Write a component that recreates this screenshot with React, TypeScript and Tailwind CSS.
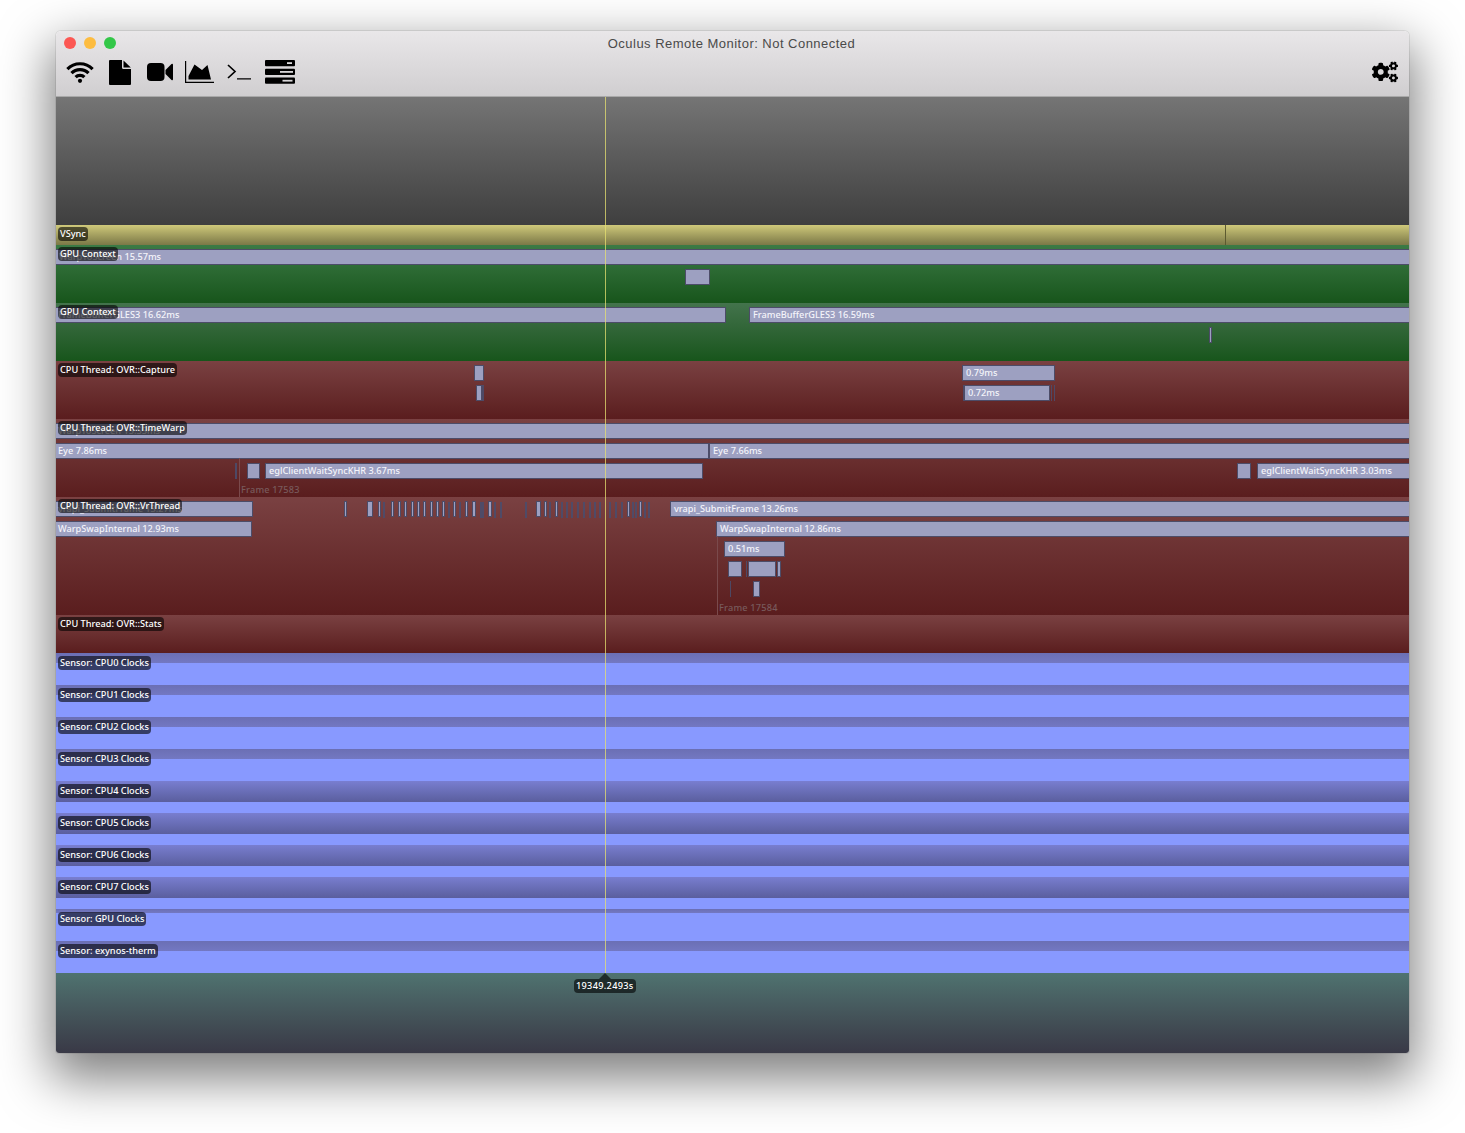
import React from "react";
import { FaCogs } from "react-icons/fa";

const W = 56;
type B = { x: number; r: number; row?: number; y?: number; t?: string; d?: boolean };

function Bar({ b, top }: { b: B; top: number }) {
  const y = b.y !== undefined ? b.y - top : 4 + (b.row ?? 0) * 20;
  const shift = b.t ? 1 : 0;
  const x = b.x - W - shift;
  const w = b.r - b.x + shift;
  const cls = b.d
    ? "absolute h-4 bg-[#4b4d6c] opacity-90"
    : b.t
      ? "absolute h-4 border border-[#4c4c68] bg-[#9da0c1] pl-[3px] text-[9.2px] font-medium leading-[14px] text-[#f4f4fa] whitespace-nowrap overflow-hidden"
      : "absolute h-4 border border-[#4c4c68] bg-[#9da0c1]";
  return (
    <div className={cls} style={{ left: x, top: y, width: w }}>
      {b.t}
    </div>
  );
}

function Label({ children, top = 2 }: { children: React.ReactNode; top?: number }) {
  return (
    <div
      className="absolute left-[2px] z-10 h-[14px] rounded-[4px] bg-black/60 px-[2px] text-[9.2px] font-medium leading-[14px] text-white whitespace-nowrap"
      style={{ top }}
    >
      {children}
    </div>
  );
}

function Track({
  top,
  height,
  cls,
  label,
  bars = [],
  children,
}: {
  top: number;
  height: number;
  cls: string;
  label: string;
  bars?: B[];
  children?: React.ReactNode;
}) {
  return (
    <div className={"relative overflow-hidden " + cls} style={{ height }}>
      {bars.map((b, i) => (
        <Bar key={i} b={b} top={top} />
      ))}
      {children}
      <Label>{label}</Label>
    </div>
  );
}

function Sensor({ label, head, deep }: { label: string; head: string; deep?: boolean }) {
  return (
    <div className="relative h-8 bg-[#8899ff]">
      <div
        className={
          deep
            ? "bg-gradient-to-b from-[#797ed0] to-[#5a5e9e] " + head
            : "bg-gradient-to-b from-[#6b6fb4] to-[#7378c2] " + head
        }
      />
      <Label top={3}>{label}</Label>
    </div>
  );
}

const L = (x: number, wide = 1): B => ({ x: x - 1, r: x + 1 + wide, y: 501 });
const lightTicks = [345, 379, 392, 399, 405, 412, 418, 424, 431, 437, 443, 454, 466, 545, 556, 628, 640];
const darkTicks = [384, 449, 460, 481, 483, 495, 501, 526, 550, 562, 567, 572, 578, 584, 590, 595, 600, 610, 616, 622, 633, 636, 645, 649];

function Wifi() {
  return (
    <svg width="28" height="21" viewBox="0 0 28 21" fill="none" stroke="#000" strokeWidth="3.2" className="mt-[1px]">
      <path d="M1.4 7.1 A17.5 17.5 0 0 1 26.6 7.1" />
      <path d="M5.5 11.2 A11.7 11.7 0 0 1 22.5 11.2" />
      <path d="M9.6 15.2 A6 6 0 0 1 18.4 15.2" />
      <circle cx="14" cy="18.8" r="2.1" fill="#000" stroke="none" />
    </svg>
  );
}
function FileIcon() {
  return (
    <svg width="22" height="25" viewBox="0 0 22 25" fill="#000">
      <path d="M1 0 H13 V7.5 Q13 9 14.5 9 H22 V24 Q22 25 21 25 H1 Q0 25 0 24 V1 Q0 0 1 0Z" />
      <path d="M14.5 .5 L21.8 7.6 H14.5Z" />
    </svg>
  );
}
function VideoIcon() {
  return (
    <svg width="26" height="18" viewBox="0 0 26 18" fill="#000">
      <rect width="17.5" height="18" rx="4" />
      <path d="M18.5 7 L24.5 1 Q26 0 26 2 V16 Q26 18 24.5 17 L18.5 11Z" />
    </svg>
  );
}
function AreaIcon() {
  return (
    <svg width="29" height="22" viewBox="0 0 29 22" fill="#000" className="-translate-x-[1px]">
      <path d="M0 0 H1.2 V20.8 H29 V22 H0Z" />
      <path d="M3.5 18.5 V15 L9.5 3.5 L17 9 L22.5 4 L26 18.5Z" />
    </svg>
  );
}
function TerminalIcon() {
  return (
    <svg width="24" height="16" viewBox="0 0 24 16" fill="none" stroke="#000" className="-translate-x-[1px]">
      <path d="M1 1 L8 7.5 L1 14" strokeWidth="1.7" />
      <path d="M10 14.8 H24" strokeWidth="1.3" />
    </svg>
  );
}
function ServerIcon() {
  return (
    <svg width="30" height="24" viewBox="0 0 30 24" fill="#000">
      <rect y="0" width="30" height="6.2" rx="1" />
      <rect y="8.8" width="30" height="6.2" rx="1" />
      <rect y="17.6" width="30" height="6.2" rx="1" />
      <rect x="22" y="2.2" width="5" height="1.8" fill="#dddbdd" />
      <rect x="15" y="11" width="13" height="1.8" fill="#d9d7d9" />
      <rect x="17.5" y="19.8" width="10" height="1.8" fill="#d6d4d6" />
    </svg>
  );
}

const SANS = "font-['Noto_Sans',sans-serif]";

export default function App() {
  return (
    <div className={"min-h-[1133px] bg-white pl-[56px] pt-[31px] " + SANS}>
      <div className="relative w-[1353px] overflow-hidden rounded-t-[5px] rounded-b-[3px] shadow-[0_20px_50px_6px_rgba(0,0,0,0.5),0_0_0_1px_rgba(0,0,0,0.08)]">
        <div className="h-[66px] border-b border-[#a9a9a9] bg-gradient-to-b from-[#e9e7e9] to-[#d0ced0]">
          <div className="grid h-[24px] grid-cols-[1fr_auto_1fr] items-center pl-2 pr-[10px]">
            <div className="flex gap-2">
              <span className="size-3 rounded-full bg-[#fc5753]" />
              <span className="size-3 rounded-full bg-[#fdbc40]" />
              <span className="size-3 rounded-full bg-[#33c748]" />
            </div>
            <div className="font-['Liberation_Sans',sans-serif] text-[13px] leading-none tracking-[0.47px] text-[#4a4a4a]">
              Oculus Remote Monitor: Not Connected
            </div>
            <div />
          </div>
          <div className="flex h-[34px] items-center justify-between pl-1 pr-[4px]">
            <div className="flex">
              {[Wifi, FileIcon, VideoIcon, AreaIcon, TerminalIcon, ServerIcon].map((I, i) => (
                <div key={i} className="flex h-[34px] w-10 items-center justify-center">
                  <I />
                </div>
              ))}
            </div>
            <div className="flex h-[34px] w-10 items-center justify-center">
              <FaCogs size={26} color="#000" />
            </div>
          </div>
        </div>

        <div className="h-[128px] bg-gradient-to-b from-[#757575] to-[#3f3f3f]" />

        <div className="relative h-[20px] bg-gradient-to-b from-[#cfc97a] to-[#7b7847]">
          <div className="absolute left-[1169px] top-0 h-full w-[1px] bg-[#5c5a30]" />
          <Label>VSync</Label>
        </div>

        <Track top={245} height={58} cls="bg-gradient-to-b from-[#3b7a45] to-[#17551b]" label="GPU Context"
          bars={[
            { x: 56, r: 1412, row: 0, t: "WarpToScreen 15.57ms" },
            { x: 685, r: 710, row: 1 },
          ]} />
        <Track top={303} height={58} cls="bg-gradient-to-b from-[#43734c] to-[#17551b]" label="GPU Context"
          bars={[
            { x: 55, r: 726, row: 0, t: "FrameBufferGLES3 16.62ms" },
            { x: 750, r: 1412, row: 0, t: "FrameBufferGLES3 16.59ms" },
            { x: 1209, r: 1212, row: 1 },
          ]} />
        <Track top={361} height={58} cls="bg-gradient-to-b from-[#7a4142] to-[#5a1d1e]" label="CPU Thread: OVR::Capture"
          bars={[
            { x: 474, r: 484, row: 0 },
            { x: 476, r: 482, row: 1 },
            { x: 482, r: 484, row: 1, d: true },
            { x: 963, r: 1055, row: 0, t: "0.79ms" },
            { x: 965, r: 1050, row: 1, t: "0.72ms" },
            { x: 963, r: 964, row: 1, d: true },
            { x: 1051, r: 1052, row: 1, d: true },
            { x: 1054, r: 1055, row: 1, d: true },
          ]} />
        <Track top={419} height={78} cls="bg-gradient-to-b from-[#7a4142] to-[#5a1d1e]" label="CPU Thread: OVR::TimeWarp"
          bars={[
            { x: 55, r: 1412, row: 0, t: "WarpToScreen 15.55ms" },
            { x: 55, r: 709, row: 1, t: "Eye 7.86ms" },
            { x: 710, r: 1412, row: 1, t: "Eye 7.66ms" },
            { x: 235, r: 237, row: 2, d: true },
            { x: 247, r: 260, row: 2 },
            { x: 266, r: 703, row: 2, t: "eglClientWaitSyncKHR 3.67ms" },
            { x: 1237, r: 1251, row: 2 },
            { x: 1258, r: 1412, row: 2, t: "eglClientWaitSyncKHR 3.03ms" },
          ]}>
          <div className="absolute left-[183px] top-[39px] bottom-0 w-[1px] bg-[#7a4a4c]" />
          <div className="absolute left-[185px] top-[64px] text-[9.2px] font-medium leading-[14px] tracking-[0.2px] text-[#785a5c]">Frame 17583</div>
        </Track>
        <Track top={497} height={118} cls="bg-gradient-to-b from-[#7a4142] to-[#5a1d1e]" label="CPU Thread: OVR::VrThread"
          bars={[
            { x: 55, r: 253, row: 0, t: "vrapi_SubmitFrame 13.27ms" },
            { x: 671, r: 1412, row: 0, t: "vrapi_SubmitFrame 13.26ms" },
            { x: 55, r: 252, row: 1, t: "WarpSwapInternal 12.93ms" },
            { x: 717, r: 1412, row: 1, t: "WarpSwapInternal 12.86ms" },
            { x: 725, r: 785, row: 2, t: "0.51ms" },
            { x: 728, r: 742, row: 3 },
            { x: 746, r: 747, row: 3, d: true },
            { x: 748, r: 776, row: 3 },
            { x: 777, r: 781, row: 3 },
            { x: 730, r: 731, row: 4, d: true },
            { x: 753, r: 760, row: 4 },
            { x: 367, r: 373, row: 0 },
            { x: 472, r: 476, row: 0 },
            { x: 488, r: 492, row: 0 },
            { x: 536, r: 541, row: 0 },
            ...lightTicks.map((x) => L(x)),
            ...darkTicks.map((x): B => ({ x: x - 1, r: x + 1, y: 502, d: true })),
          ]}>
          <div className="absolute left-[661px] top-[39px] bottom-0 w-[1px] bg-[#7a4a4c]" />
          <div className="absolute left-[663px] top-[104px] text-[9.2px] font-medium leading-[14px] tracking-[0.2px] text-[#785a5c]">Frame 17584</div>
        </Track>
        <Track top={615} height={38} cls="bg-gradient-to-b from-[#7a4142] to-[#5a1d1e]" label="CPU Thread: OVR::Stats" />

        <Sensor label="Sensor: CPU0 Clocks" head="h-[10px]" />
        <Sensor label="Sensor: CPU1 Clocks" head="h-[10px]" />
        <Sensor label="Sensor: CPU2 Clocks" head="h-[10px]" />
        <Sensor label="Sensor: CPU3 Clocks" head="h-[10px]" />
        <Sensor label="Sensor: CPU4 Clocks" head="h-[21px]" deep />
        <Sensor label="Sensor: CPU5 Clocks" head="h-[21px]" deep />
        <Sensor label="Sensor: CPU6 Clocks" head="h-[21px]" deep />
        <Sensor label="Sensor: CPU7 Clocks" head="h-[21px]" deep />
        <Sensor label="Sensor: GPU Clocks" head="h-[4px]" />
        <Sensor label="Sensor: exynos-therm" head="h-[10px]" />

        <div className="relative h-[80px] bg-gradient-to-b from-[#4f7370] to-[#393946]">
          <div className="absolute left-[518px] top-[6px] h-[14px] rounded-[4px] bg-black/60 px-[2px] text-[9.2px] font-medium leading-[14px] tracking-[0.3px] text-white">
            19349.2493s
          </div>
          <div className="absolute left-[543px] top-0 size-0 border-x-[6px] border-b-[6px] border-x-transparent border-b-black/60" />
        </div>

        <div className="absolute left-[549px] top-[66px] h-[876px] w-[1px] bg-[#e6e070]/75" />
      </div>
    </div>
  );
}
